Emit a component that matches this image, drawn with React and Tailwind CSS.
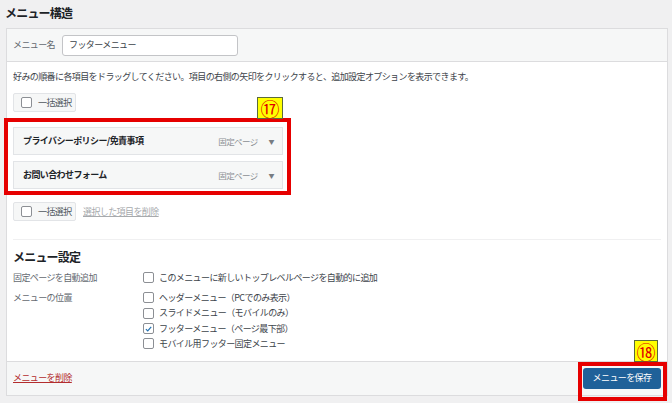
// WordPress の「メニュー構造」編集画面。赤枠と番号札は説明用の注記。
const FONT = { fontFamily: '"Noto Sans CJK JP", "Noto Sans", sans-serif' }

const ITEMS = ['プライバシーポリシー/免責事項', 'お問い合わせフォーム']

const LOCATIONS = [
  ['ヘッダーメニュー（PCでのみ表示）', false],
  ['スライドメニュー（モバイルのみ）', false],
  ['フッターメニュー（ページ最下部）', true],
  ['モバイル用フッター固定メニュー', false],
]

function Checkbox({ checked }) {
  return (
    <span className="flex h-[11px] w-[11px] shrink-0 items-center justify-center rounded-[2px] border border-[#8c8f94] bg-white">
      {checked && (
        <svg viewBox="0 0 12 12" className="h-[10px] w-[10px]">
          <path d="M2.5 6.2 5 8.6 9.6 3.2" fill="none" stroke="#2271b1" strokeWidth="1.6" />
        </svg>
      )}
    </span>
  )
}

function BulkSelect() {
  return (
    <div className="flex h-[19px] w-[63px] items-center gap-[6px] rounded-[2px] border border-[#e2e4e7] bg-[#f6f7f7] pl-[7px] text-[#50575e]">
      <Checkbox />
      <span>一括選択</span>
    </div>
  )
}

function Badge({ children, className }) {
  return (
    <div
      className={`absolute flex h-[22px] items-center justify-center border border-[#5b6b3a] bg-[#ffff00] text-[19px] leading-none tracking-normal text-[#e00000] ${className}`}
    >
      {children}
    </div>
  )
}

export default function App() {
  return (
    <div
      className="relative h-[403px] w-[672px] overflow-hidden bg-[#f0f0f1] text-[9px] tracking-[-0.6px] text-[#3c434a]"
      style={FONT}
    >
      <h2 className="pl-[5px] pt-[3px] text-[12px] font-bold leading-[20px] tracking-[-0.8px] text-[#1d2327]">
        メニュー構造
      </h2>

      <div className="ml-[6px] mt-[5px] w-[662px] border border-[#dcdcde] bg-white">
        <div className="flex h-[33px] items-center gap-[7px] border-b border-[#dcdcde] bg-[#f6f7f7] px-[6px]">
          <span className="text-[#646970]">メニュー名</span>
          <div className="flex h-[21px] w-[176px] items-center rounded-[3px] border border-[#c3c4c7] bg-white px-[6px] text-[#3c434a]">
            フッターメニュー
          </div>
        </div>

        <div className="px-[6px]">
          <p className="pt-[8px] leading-[14px]">
            好みの順番に各項目をドラッグしてください。項目の右側の矢印をクリックすると、追加設定オプションを表示できます。
          </p>

          <div className="mt-[9px]">
            <BulkSelect />
          </div>

          <ul className="mt-[15px] flex w-[270px] flex-col gap-[6px]">
            {ITEMS.map((title) => (
              <li
                key={title}
                className="flex h-[28px] items-center border border-[#e2e4e7] bg-[#f6f7f7] pl-[9px] pr-[8px]"
              >
                <span className="flex-1 font-bold text-[#1d2327]">{title}</span>
                <span className="text-[8.5px] text-[#8c8f94]">固定ページ</span>
                <span className="ml-[11px] text-[6px] text-[#787c82]">▼</span>
              </li>
            ))}
          </ul>

          <div className="mt-[13px] flex items-center gap-[7px]">
            <BulkSelect />
            <span className="text-[#a7aaad] underline">選択した項目を削除</span>
          </div>

          <div className="mt-[18px] border-t border-[#f0f0f1]" />

          <h3 className="mt-[8px] text-[12px] font-bold leading-[18px] tracking-[-0.8px] text-[#1d2327]">
            メニュー設定
          </h3>

          <div className="mt-[4px] flex leading-[15px]">
            <span className="w-[130px] text-[#646970]">固定ページを自動追加</span>
            <label className="flex items-center gap-[5px]">
              <Checkbox />
              このメニューに新しいトップレベルページを自動的に追加
            </label>
          </div>

          <div className="mt-[5px] flex pb-[9px] leading-[15.4px]">
            <span className="w-[130px] text-[#646970]">メニューの位置</span>
            <div className="flex flex-col">
              {LOCATIONS.map(([label, checked]) => (
                <label key={label} className="flex items-center gap-[5px]">
                  <Checkbox checked={checked} />
                  {label}
                </label>
              ))}
            </div>
          </div>
        </div>

        <div className="flex h-[34px] items-center justify-between border-t border-[#dcdcde] bg-[#f6f7f7] pl-[6px] pr-[6px]">
          <span className="text-[#b32d2e] underline">メニューを削除</span>
          <div className="flex h-[21px] w-[78px] items-center justify-center rounded-[3px] bg-[#1f6199] text-white">
            メニューを保存
          </div>
        </div>
      </div>

      {/* 注記 */}
      <div className="absolute left-[4px] top-[118px] h-[77px] w-[287px] border-4 border-[#e60000]" />
      <Badge className="left-[257px] top-[97px] w-[26px]">⑰</Badge>
      <div className="absolute left-[578px] top-[362px] h-[39px] w-[89px] border-4 border-[#e60000]" />
      <Badge className="left-[634px] top-[340px] w-[24px]">⑱</Badge>
    </div>
  )
}
